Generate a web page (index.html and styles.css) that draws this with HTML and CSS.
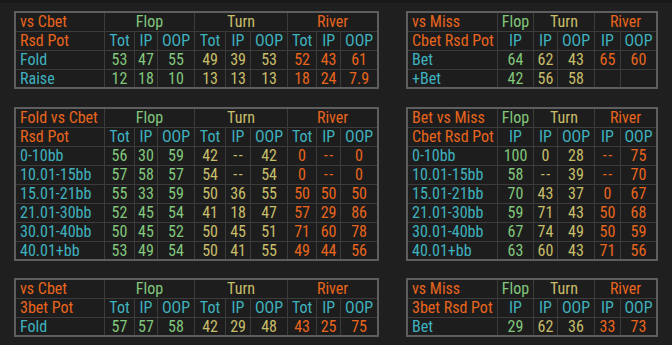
FILE: index.html
```html
<!DOCTYPE html>
<html lang="en">
<head>
<meta charset="utf-8">
<title>Stats</title>
<link rel="stylesheet" href="styles.css">
</head>
<body>
<div class="page">

<table class="stats wide top">
  <colgroup><col class="c-lab"><col class="c1"><col class="c2"><col class="c3"><col class="c4"><col class="c5"><col class="c6"><col class="c7"><col class="c8"><col class="c9"></colgroup>
  <tr><td class="lab o">vs Cbet</td><td colspan="3" class="g">Flop</td><td colspan="3" class="y">Turn</td><td colspan="3" class="o">River</td></tr>
  <tr><td class="lab o">Rsd Pot</td><td class="t">Tot</td><td class="t">IP</td><td class="t">OOP</td><td class="t">Tot</td><td class="t">IP</td><td class="t">OOP</td><td class="t">Tot</td><td class="t">IP</td><td class="t">OOP</td></tr>
  <tr><td class="lab t">Fold</td><td class="g">53</td><td class="g">47</td><td class="g">55</td><td class="y">49</td><td class="y">39</td><td class="y">53</td><td class="o">52</td><td class="o">43</td><td class="o">61</td></tr>
  <tr><td class="lab t">Raise</td><td class="g">12</td><td class="g">18</td><td class="g">10</td><td class="y">13</td><td class="y">13</td><td class="y">13</td><td class="o">18</td><td class="o">24</td><td class="o">7.9</td></tr>
</table>

<table class="stats narrow top">
  <colgroup><col class="n-lab"><col class="n1"><col class="n2"><col class="n3"><col class="n4"><col class="n5"></colgroup>
  <tr><td class="lab o">vs Miss</td><td class="g">Flop</td><td colspan="2" class="y">Turn</td><td colspan="2" class="o">River</td></tr>
  <tr><td class="lab o">Cbet Rsd Pot</td><td class="t">IP</td><td class="t">IP</td><td class="t">OOP</td><td class="t">IP</td><td class="t">OOP</td></tr>
  <tr><td class="lab t">Bet</td><td class="g">64</td><td class="y">62</td><td class="y">43</td><td class="o">65</td><td class="o">60</td></tr>
  <tr><td class="lab t">+Bet</td><td class="g">42</td><td class="y">56</td><td class="y">58</td><td class="o"></td><td class="o"></td></tr>
</table>

<table class="stats wide">
  <colgroup><col class="c-lab"><col class="c1"><col class="c2"><col class="c3"><col class="c4"><col class="c5"><col class="c6"><col class="c7"><col class="c8"><col class="c9"></colgroup>
  <tr><td class="lab o">Fold vs Cbet</td><td colspan="3" class="g">Flop</td><td colspan="3" class="y">Turn</td><td colspan="3" class="o">River</td></tr>
  <tr><td class="lab o">Rsd Pot</td><td class="t">Tot</td><td class="t">IP</td><td class="t">OOP</td><td class="t">Tot</td><td class="t">IP</td><td class="t">OOP</td><td class="t">Tot</td><td class="t">IP</td><td class="t">OOP</td></tr>
  <tr><td class="lab t">0-10bb</td><td class="g">56</td><td class="g">30</td><td class="g">59</td><td class="y">42</td><td class="y na">--</td><td class="y">42</td><td class="o">0</td><td class="o na">--</td><td class="o">0</td></tr>
  <tr><td class="lab t">10.01-15bb</td><td class="g">57</td><td class="g">58</td><td class="g">57</td><td class="y">54</td><td class="y na">--</td><td class="y">54</td><td class="o">0</td><td class="o na">--</td><td class="o">0</td></tr>
  <tr><td class="lab t">15.01-21bb</td><td class="g">55</td><td class="g">33</td><td class="g">59</td><td class="y">50</td><td class="y">36</td><td class="y">55</td><td class="o">50</td><td class="o">50</td><td class="o">50</td></tr>
  <tr><td class="lab t">21.01-30bb</td><td class="g">52</td><td class="g">45</td><td class="g">54</td><td class="y">41</td><td class="y">18</td><td class="y">47</td><td class="o">57</td><td class="o">29</td><td class="o">86</td></tr>
  <tr><td class="lab t">30.01-40bb</td><td class="g">50</td><td class="g">45</td><td class="g">52</td><td class="y">50</td><td class="y">45</td><td class="y">51</td><td class="o">71</td><td class="o">60</td><td class="o">78</td></tr>
  <tr><td class="lab t">40.01+bb</td><td class="g">53</td><td class="g">49</td><td class="g">54</td><td class="y">50</td><td class="y">41</td><td class="y">55</td><td class="o">49</td><td class="o">44</td><td class="o">56</td></tr>
</table>

<table class="stats narrow">
  <colgroup><col class="n-lab"><col class="n1"><col class="n2"><col class="n3"><col class="n4"><col class="n5"></colgroup>
  <tr><td class="lab o">Bet vs Miss</td><td class="g">Flop</td><td colspan="2" class="y">Turn</td><td colspan="2" class="o">River</td></tr>
  <tr><td class="lab o">Cbet Rsd Pot</td><td class="t">IP</td><td class="t">IP</td><td class="t">OOP</td><td class="t">IP</td><td class="t">OOP</td></tr>
  <tr><td class="lab t">0-10bb</td><td class="g">100</td><td class="y">0</td><td class="y">28</td><td class="o na">--</td><td class="o">75</td></tr>
  <tr><td class="lab t">10.01-15bb</td><td class="g">58</td><td class="y na">--</td><td class="y">39</td><td class="o na">--</td><td class="o">70</td></tr>
  <tr><td class="lab t">15.01-21bb</td><td class="g">70</td><td class="y">43</td><td class="y">37</td><td class="o">0</td><td class="o">67</td></tr>
  <tr><td class="lab t">21.01-30bb</td><td class="g">59</td><td class="y">71</td><td class="y">43</td><td class="o">50</td><td class="o">68</td></tr>
  <tr><td class="lab t">30.01-40bb</td><td class="g">67</td><td class="y">74</td><td class="y">49</td><td class="o">50</td><td class="o">59</td></tr>
  <tr><td class="lab t">40.01+bb</td><td class="g">63</td><td class="y">60</td><td class="y">43</td><td class="o">71</td><td class="o">56</td></tr>
</table>

<table class="stats wide">
  <colgroup><col class="c-lab"><col class="c1"><col class="c2"><col class="c3"><col class="c4"><col class="c5"><col class="c6"><col class="c7"><col class="c8"><col class="c9"></colgroup>
  <tr><td class="lab o">vs Cbet</td><td colspan="3" class="g">Flop</td><td colspan="3" class="y">Turn</td><td colspan="3" class="o">River</td></tr>
  <tr><td class="lab o">3bet Pot</td><td class="t">Tot</td><td class="t">IP</td><td class="t">OOP</td><td class="t">Tot</td><td class="t">IP</td><td class="t">OOP</td><td class="t">Tot</td><td class="t">IP</td><td class="t">OOP</td></tr>
  <tr><td class="lab t">Fold</td><td class="g">57</td><td class="g">57</td><td class="g">58</td><td class="y">42</td><td class="y">29</td><td class="y">48</td><td class="o">43</td><td class="o">25</td><td class="o">75</td></tr>
</table>

<table class="stats narrow">
  <colgroup><col class="n-lab"><col class="n1"><col class="n2"><col class="n3"><col class="n4"><col class="n5"></colgroup>
  <tr><td class="lab o">vs Miss</td><td class="g">Flop</td><td colspan="2" class="y">Turn</td><td colspan="2" class="o">River</td></tr>
  <tr><td class="lab o">3bet Rsd Pot</td><td class="t">IP</td><td class="t">IP</td><td class="t">OOP</td><td class="t">IP</td><td class="t">OOP</td></tr>
  <tr><td class="lab t">Bet</td><td class="g">29</td><td class="y">62</td><td class="y">36</td><td class="o">33</td><td class="o">73</td></tr>
</table>

</div>
</body>
</html>
```

FILE: styles.css
```css
html, body {
  margin: 0;
  padding: 0;
  background: #1f1f1f;
}
body {
  border-top: 3px solid #191919;
  font-family: "Roboto Condensed", Roboto, "Liberation Sans", sans-serif;
  font-stretch: condensed;
  font-size: 16px;
}
.page {
  display: grid;
  grid-template-columns: 365px 251px;
  column-gap: 27px;
  row-gap: 17px;
  align-items: start;
  padding: 8px 0 0 14px;
}
.stats {
  border-collapse: separate;
  border-spacing: 0;
  table-layout: fixed;
  border: 2px solid #5e5e5e;
  background: #1d1d1d;
}
.stats.top { margin-bottom: 1px; }
.stats.wide { width: 365px; }
.stats.narrow { width: 252px; }
.stats tr { height: 19px; }
.stats tr:last-child { height: 17px; }
.stats td {
  padding: 0;
  line-height: 18px;
  text-align: center;
  white-space: nowrap;
  overflow: hidden;
  border-right: 1px solid #3c3c3c;
  border-bottom: 1px solid #3c3c3c;
}
.stats tr:last-child td { line-height: 17px; border-bottom: none; }
.stats td:last-child { border-right: none; }
.stats td.lab {
  text-align: left;
  padding-left: 4px;
}
.stats td.na { letter-spacing: 1.5px; text-indent: 1.5px; }

.c-lab { width: 89px; }
.c1 { width: 30px; }
.c2 { width: 23px; }
.c3 { width: 37px; }
.c4 { width: 31px; }
.c5 { width: 25px; }
.c6 { width: 37px; }
.c7 { width: 29px; }
.c8 { width: 24px; }
.c9 { width: 36px; }

.n-lab { width: 90px; }
.n1 { width: 36px; }
.n2 { width: 24px; }
.n3 { width: 37px; }
.n4 { width: 26px; }
.n5 { width: 35px; }

.o { color: #e8651d; }
.g { color: #82c77c; }
.y { color: #c8bd6a; }
.t { color: #3fb2bf; }
```
